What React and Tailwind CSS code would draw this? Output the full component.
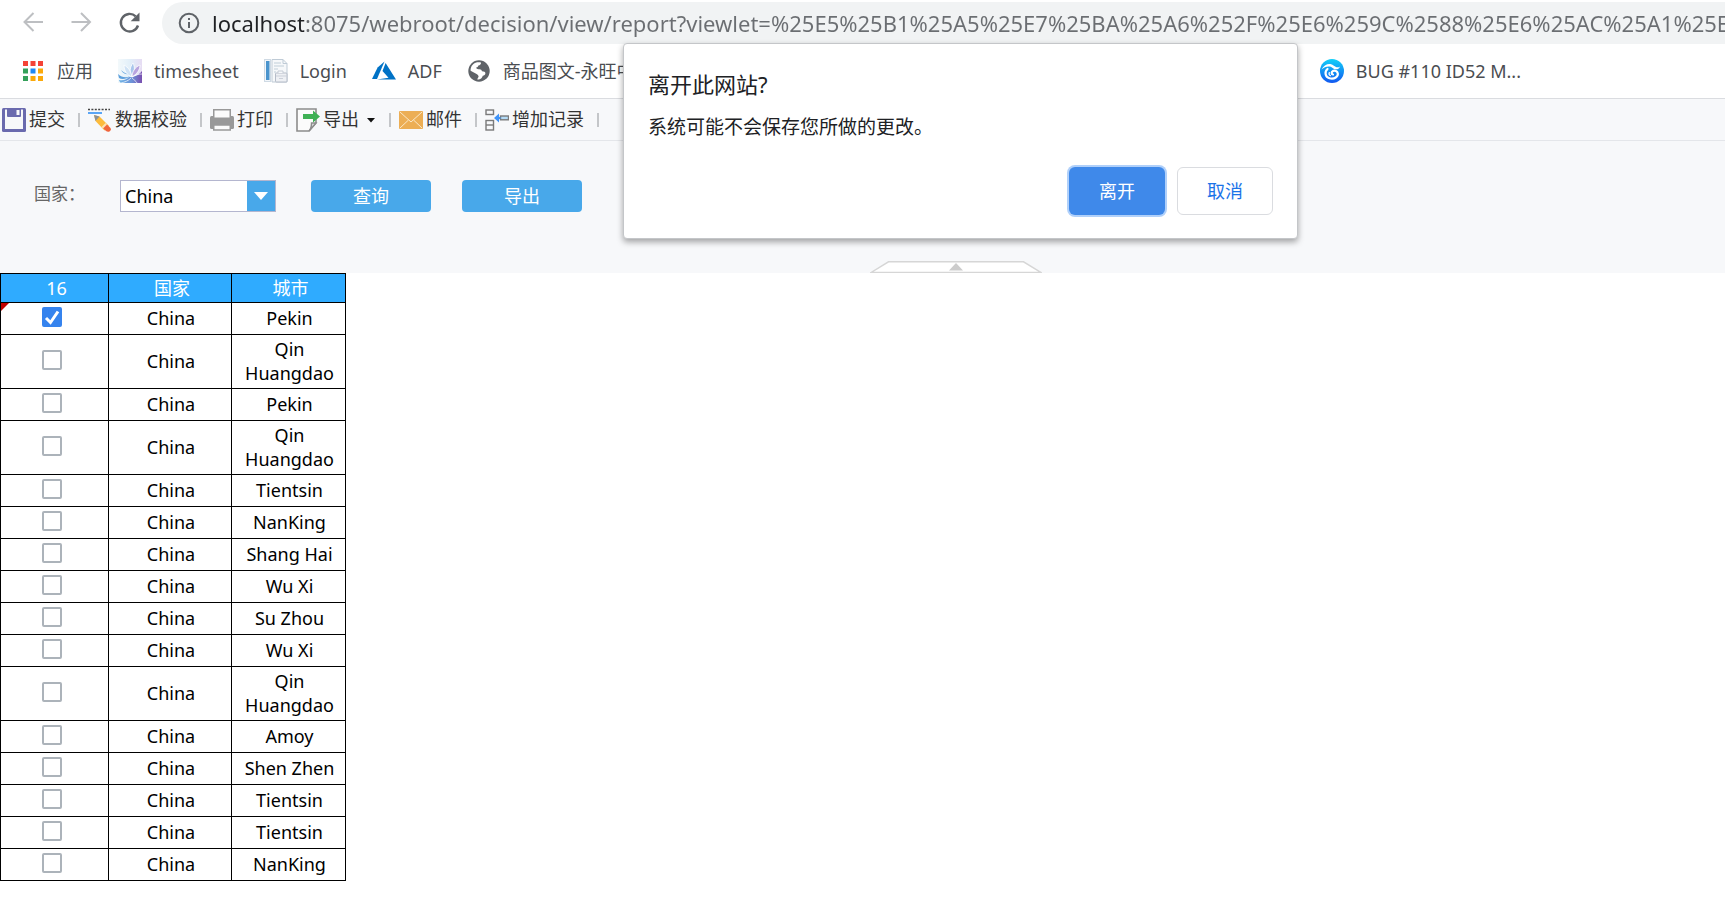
import React, { useState } from 'react';

const URL_TEXT =
  'localhost:8075/webroot/decision/view/report?viewlet=%25E5%25B1%25A5%25E7%25BA%25A6%252F%25E6%259C%2588%25E6%25AC%25A1%25E6';

const ROWS = [
  'Pekin',
  'Qin Huangdao',
  'Pekin',
  'Qin Huangdao',
  'Tientsin',
  'NanKing',
  'Shang Hai',
  'Wu Xi',
  'Su Zhou',
  'Wu Xi',
  'Qin Huangdao',
  'Amoy',
  'Shen Zhen',
  'Tientsin',
  'Tientsin',
  'NanKing',
];

const AppsIcon = () => {
  const colors = ['#f44336', '#f44336', '#f44336', '#34a05a', '#1e88f5', '#fba90a', '#34a05a', '#fba90a', '#fba90a'];
  return (
    <svg width="24" height="24" viewBox="0 0 24 24">
      {colors.map((color, i) => (
        <rect key={i} x={2 + (i % 3) * 7.5} y={2 + Math.floor(i / 3) * 7.5} width="5" height="5" fill={color} />
      ))}
    </svg>
  );
};

const TimesheetIcon = () => (
  <svg width="24" height="24" viewBox="0 0 24 24">
    <defs>
      <linearGradient id="sky" x1="0" y1="0" x2="1" y2="0">
        <stop offset="0" stopColor="#f3f9fb" />
        <stop offset="0.5" stopColor="#e2eff9" />
        <stop offset="1" stopColor="#e6dcf3" />
      </linearGradient>
      <linearGradient id="feather" x1="0" y1="0" x2="1" y2="0">
        <stop offset="0" stopColor="#6fb4e6" />
        <stop offset="0.55" stopColor="#6d93d8" />
        <stop offset="1" stopColor="#7a4fb0" />
      </linearGradient>
    </defs>
    <rect width="24" height="24" fill="url(#sky)" />
    <path d="M24 12v12H3c-1-1-2-2-2-3 5 1 8-1 10-3 4 0 9-1 13-6z" fill="url(#feather)" />
    <path d="M0 15c4 4 9 4 12 2-3 3-8 4-11 2zM3 11c3 3 6 4 9 4-3 1-7 0-9-4z" fill="#5d9fdc" />
    <path d="M15 4c2 4 2 9-1 14-3-5-2-10 1-14z" fill="#a9c6ec" stroke="#ffffff" strokeWidth="0.800" />
    <path d="M22 6c0 5-3 9-8 12 0-5 3-10 8-12z" fill="#b9a4de" stroke="#ffffff" strokeWidth="0.800" />
    <path d="M6 6c4 2 7 6 8 12-5-2-8-6-8-12z" fill="#cfe2f5" stroke="#ffffff" strokeWidth="0.800" />
    <path d="M14 18c3-2 7-3 10-3M13 19c-3 3-6 4-10 5M14 19c2 2 4 3 5 5" stroke="#ffffff" strokeWidth="0.700" fill="none" />
  </svg>
);

const LoginIcon = () => (
  <svg width="24" height="24" viewBox="0 0 24 24">
    <rect x="0.5" y="0.5" width="6" height="22" fill="#f2f6fa" stroke="#cfdae4" />
    <rect x="2" y="2" width="3.5" height="19" fill="#4a94cd" />
    <path d="M8 .5h11l4 4V23H8z" fill="#f6f8fa" stroke="#bfcbd6" />
    <path d="M19 .5v4h4" fill="none" stroke="#bfcbd6" />
    <path d="M10 4h7M10 7h10M10 10h4M10 13h2" stroke="#d2dbe4" strokeWidth="1.5" />
    <rect x="11.5" y="14" width="11.5" height="9" rx="1" fill="#eef0f4" stroke="#b5bcc8" />
    <path d="M12 17h11M15 19.5h4" stroke="#cbd0d9" />
    <path d="M14 14v-2h5v2" fill="#f6f8fa" stroke="#c6ccd6" />
  </svg>
);

const AzureIcon = () => (
  <svg width="24" height="24" viewBox="0 0 24 24">
    <path d="M12.5 2.5 5.6 8.6 0 20h5z" fill="#0072c6" />
    <path d="M13.6 4 10.5 12l6 6.7L5 20.6h19z" fill="#0072c6" />
  </svg>
);

const GlobeIcon = () => (
  <svg width="24" height="24" viewBox="0 0 24 24">
    <circle cx="12" cy="12" r="10.7" fill="#5f6368" />
    <path
      d="M14 3.600c.2 2-1 2.600-2.600 3-.4 1.300-1 1.900-2.200 2 .2 1.500 1 1.700 3 1.600 1.700-.1 2.500.7 2.800 2 2 .1 3.300.5 3.400 2 0 1.700-1.200 2.300-2.600 2.500-.5 1.900-1.900 3.400-4 3.800-.8.1-1.300 0-1.600-.2l1.400-2.600c-.2-1.300-1-2-2-2.600l-6-3.300c-.2-3.800 1.800-6.800 5-8.100 1.800-.6 3.800-.6 5.400-.1z"
      fill="#ffffff"
    />
  </svg>
);

const WaveIcon = () => (
  <svg width="24" height="24" viewBox="0 0 24 24">
    <defs>
      <linearGradient id="wave" x1="0" y1="0" x2="0" y2="1">
        <stop offset="0" stopColor="#12d0f8" />
        <stop offset="1" stopColor="#1258f0" />
      </linearGradient>
    </defs>
    <circle cx="12" cy="12" r="12" fill="url(#wave)" />
    <path
      d="M1.500 10.500C3.500 6.500 7 4.500 10.500 5c3 .5 4 2.800 6 3.200 1.300.3 2.500 0 3.500-.8-.8 2.500-3.500 3.600-5.800 2.600C12.500 9.200 11.500 7.800 9.500 7.600 6.500 7.300 4 8.500 1.500 10.500z"
      fill="#ffffff"
    />
    <path
      d="M7.500 10C4.500 12.500 4.800 18 9.500 19.300c5 1.300 8.800-1.800 8.300-4.800-.4-2.500-3-3.500-4.800-2.600-1.800.9-1.800 3.300 0 3.600"
      stroke="#ffffff"
      strokeWidth="2.200"
      fill="none"
      strokeLinecap="round"
    />
    <path d="M9.300 13.500c-.6 1.500 0 2.700 1.200 3.200" stroke="#ffffff" strokeWidth="1.200" fill="none" strokeLinecap="round" />
  </svg>
);

const SaveIcon = () => (
  <svg width="24" height="24" viewBox="0 0 24 24">
    <rect width="24" height="24" rx="1.500" fill="#6a6aae" />
    <rect x="3" y="1.500" width="18" height="19.500" fill="#f7f8fa" />
    <path d="M5 0h14v8q0 1-1 1H6q-1 0-1-1z" fill="#6a6aae" />
    <rect x="14.500" y="2" width="3" height="5" fill="#f7f8fa" />
  </svg>
);

const VerifyIcon = () => (
  <svg width="24" height="24" viewBox="0 0 24 24">
    <path d="M0 1.500h22" stroke="#444444" strokeWidth="1.500" strokeDasharray="2 1.400" />
    <path d="M0 5h14" stroke="#5aa5f5" strokeWidth="2" />
    <path d="m6 7 5.500 1.500L21 18l-4.500 4.500L7.500 13z" fill="#fcbb3c" />
    <path d="m6 7 5.500 1.500-4 4.500z" fill="#8a8f96" />
    <path d="m18.500 16 4 4q1 2-1 3.500-2 .8-3.500-.5l-3.500-3.500z" fill="#f0653c" />
    <path d="m17.500 15 1.500 1.500-4 4-1.500-1.500z" fill="#fde0b0" />
  </svg>
);

const PrintIcon = () => (
  <svg width="24" height="24" viewBox="0 0 24 24">
    <rect x="0" y="8" width="24" height="13" rx="1.500" fill="#999999" />
    <rect x="3.750" y="1.750" width="16.500" height="9" fill="#fbfbfb" stroke="#999999" strokeWidth="1.500" />
    <rect x="3" y="9.500" width="18" height="2.500" fill="#999999" />
    <rect x="3.750" y="17" width="16.500" height="5" fill="#fbfbfb" stroke="#999999" strokeWidth="1.500" />
  </svg>
);

const ExportIcon = () => (
  <svg width="24" height="24" viewBox="0 0 24 24">
    <path d="M1 1h19v14l-7 8H1z" fill="#fbfbfb" stroke="#8c8c8c" strokeWidth="1.600" />
    <path d="M20 15h-4.500c0 4-1 6.500-2.500 8z" fill="#dddddd" stroke="#8c8c8c" strokeWidth="1.400" />
    <path d="M7 6h10V2.500L24 8.500l-7 6V11H7z" fill="#3fb155" />
  </svg>
);

const MailIcon = () => (
  <svg width="24" height="24" viewBox="0 0 24 24">
    <rect y="3" width="24" height="18" rx="1" fill="#ecae55" />
    <path d="m1 4 11 10L23 4M1 20l8.500-8M23 20l-8.500-8" fill="none" stroke="#fbe8c8" strokeWidth="1" />
  </svg>
);

const InsertIcon = () => (
  <svg width="24" height="24" viewBox="0 0 24 24" fill="none">
    <rect x="1" y="2" width="7.500" height="4.500" stroke="#7a7a7a" strokeWidth="1.400" />
    <rect x="1" y="12.500" width="7.500" height="9.500" stroke="#7a7a7a" strokeWidth="1.400" />
    <path d="M1 17h7.500" stroke="#7a7a7a" strokeWidth="1.400" />
    <rect x="15.500" y="8" width="8" height="3.800" fill="#b5dcf8" stroke="#7a7a7a" strokeWidth="1.400" />
    <path d="M9 10l5-4.500V9h1.500v2H14v3.500z" fill="#3f93f8" />
  </svg>
);

const BOOKMARKS = [
  { label: '应用', icon: <AppsIcon /> },
  { label: 'timesheet', icon: <TimesheetIcon /> },
  { label: 'Login', icon: <LoginIcon /> },
  { label: 'ADF', icon: <AzureIcon /> },
  { label: '商品图文-永旺中', icon: <GlobeIcon />, wide: true },
  { label: 'BUG #110 ID52 M...', icon: <WaveIcon /> },
];

const TOOLS = [
  { label: '提交', icon: <SaveIcon /> },
  { label: '数据校验', icon: <VerifyIcon /> },
  { label: '打印', icon: <PrintIcon /> },
  { label: '导出', icon: <ExportIcon />, menu: true },
  { label: '邮件', icon: <MailIcon /> },
  { label: '增加记录', icon: <InsertIcon /> },
];

const BrowserBar = () => {
  const [url, setUrl] = useState(URL_TEXT);

  return (
    <header className="border-b border-[#dadce0] bg-white">
      <div className="flex h-11 items-center pt-0.5 pl-[22px]">
        <button aria-label="后退" className="mr-6 shrink-0">
          <svg width="24" height="24" viewBox="0 0 24 24" fill="none" stroke="#bdbfc2" strokeWidth="2">
            <path d="M21 11H2.500M11.500 2 2.500 11l9 9" />
          </svg>
        </button>
        <button aria-label="前进" className="mr-6 shrink-0">
          <svg width="24" height="24" viewBox="0 0 24 24" fill="none" stroke="#bdbfc2" strokeWidth="2">
            <path d="M1.500 11H20M11 2l9 9-9 9" />
          </svg>
        </button>
        <button aria-label="重新加载" className="mr-5 shrink-0">
          <svg width="24" height="24" viewBox="0 0 24 24">
            <path d="M20 14.500a8.800 8.800 0 1 1-2.300-9.200" fill="none" stroke="#5f6368" strokeWidth="2.400" />
            <path d="M21.500 1.500v8.800h-8.800z" fill="#5f6368" />
          </svg>
        </button>
        <div className="flex h-full min-w-0 grow items-center rounded-l-full bg-[#f1f3f4] pl-4">
          <svg className="mr-3 shrink-0" width="22" height="22" viewBox="0 0 22 22">
            <circle cx="11" cy="11" r="9.300" fill="none" stroke="#5f6368" strokeWidth="2" />
            <path d="M10 10h2v6h-2zM10 6h2v2h-2z" fill="#5f6368" />
          </svg>
          <input
            aria-label="地址"
            value={url}
            onChange={(e) => setUrl(e.target.value)}
            className="min-w-0 grow bg-[linear-gradient(to_right,#202124_92px,#6b6e72_92px)] bg-clip-text text-[22px] text-transparent outline-none"
          />
        </div>
      </div>
      <nav className="flex h-[54px] items-center gap-[25px] pl-[21px] text-[18px] text-[#4a4d51]">
        {BOOKMARKS.map((item) => (
          <a
            key={item.label}
            href="#"
            className={`flex shrink-0 items-center gap-3 whitespace-nowrap ${item.wide ? 'w-[828px]' : ''}`}
          >
            {item.icon}
            {item.label}
          </a>
        ))}
      </nav>
    </header>
  );
};

const Toolbar = () => (
  <div className="flex h-[42px] items-center border-b border-[#e4e6ea] pl-0.5 text-[18px] text-[#333333]">
    {TOOLS.map((tool) => (
      <React.Fragment key={tool.label}>
        <button className="flex items-center gap-[3px] whitespace-nowrap">
          {tool.icon}
          {tool.label}
          {tool.menu && (
            <svg className="ml-1" width="10" height="6" viewBox="0 0 10 6">
              <path d="M1 1h8L5 5.500z" fill="#111111" />
            </svg>
          )}
        </button>
        <span className="mr-2 ml-[13px] h-3.5 w-0.5 bg-[#c4c6c9]" />
      </React.Fragment>
    ))}
  </div>
);

const ParamPanel = () => (
  <div className="flex h-[132px] flex-col">
    <div className="flex grow items-start pt-[39px] pl-[34px] text-[18px] leading-8">
      <label htmlFor="country" className="w-[86px] text-[17px] leading-7 text-[#666666]">
        国家：
      </label>
      <div className="relative mr-[35px]">
        <select
          id="country"
          className="block h-8 w-[156px] appearance-none border border-[#b4b6cf] bg-white pl-1 leading-7 text-black"
        >
          <option>China</option>
        </select>
        <span className="pointer-events-none absolute inset-y-px right-px flex w-7 items-center justify-center bg-[#48a8ea]">
          <svg width="14" height="8" viewBox="0 0 14 8">
            <path d="M0 0h14L7 8z" fill="#ffffff" />
          </svg>
        </span>
      </div>
      <button className="mr-[31px] h-8 w-[120px] rounded bg-[#48a8ea] leading-7 text-white">查询</button>
      <button className="h-8 w-[120px] rounded bg-[#48a8ea] leading-7 text-white">导出</button>
    </div>
    <div className="flex justify-center pl-[186px]">
      <button aria-label="收起">
        <svg className="block" width="172" height="12" viewBox="0 0 172 12">
          <path d="M1 11.500 18.500.8h135L171 11.500z" fill="#ffffff" stroke="#d6d6d6" strokeWidth="1.400" />
          <path d="M79 9.500 86 2l7 7.500z" fill="#cccccc" />
        </svg>
      </button>
    </div>
  </div>
);

const ReportTable = () => {
  const [checked, setChecked] = useState(ROWS.map((_, i) => i === 0));

  const toggle = (index) => {
    setChecked(checked.map((value, i) => (i === index ? !value : value)));
  };

  return (
    <table className="w-[346px] table-fixed border-collapse text-center text-[18px] leading-6 text-black">
      <colgroup>
        <col className="w-[108px]" />
        <col className="w-[123px]" />
        <col className="w-[114px]" />
      </colgroup>
      <thead>
        <tr className="h-[29px] bg-[#2fabff] text-white">
          <th className="border border-black p-0 pl-1 font-normal">16</th>
          <th className="border border-black p-0 pl-1 font-normal">国家</th>
          <th className="border border-black p-0 pl-1 font-normal">城市</th>
        </tr>
      </thead>
      <tbody>
        {ROWS.map((city, index) => (
          <tr key={index} className="h-8">
            <td className="relative border border-black p-0 pr-1.5 pb-[3px]">
              {index === 0 && (
                <svg className="absolute top-0 left-0" width="8" height="8" viewBox="0 0 8 8">
                  <path d="M0 0h8L0 8z" fill="#c00000" />
                </svg>
              )}
              <label className="relative mx-auto block size-5">
                <input
                  type="checkbox"
                  aria-label={`${city} ${index + 1}`}
                  checked={checked[index]}
                  onChange={() => toggle(index)}
                  className="block size-5 appearance-none rounded-xs border-2 border-[#acb3ba] bg-white checked:border-[#3583ee] checked:bg-[#3583ee]"
                />
                {checked[index] && (
                  <svg className="pointer-events-none absolute inset-0" width="20" height="20" viewBox="0 0 20 20">
                    <path d="m4 11 4.500 4.500L16 4.500" fill="none" stroke="#ffffff" strokeWidth="3" />
                  </svg>
                )}
              </label>
            </td>
            <td className="border border-black p-0 pb-0.5 pl-0.5">China</td>
            <td className="border border-black pt-0.5 pr-2 pb-[3px] pl-2.5">{city}</td>
          </tr>
        ))}
      </tbody>
    </table>
  );
};

const LeaveDialog = () => (
  <div
    role="dialog"
    aria-labelledby="leave-title"
    className="absolute top-[43px] left-[623px] w-[675px] rounded-sm border border-[#c4c6c9] bg-white px-6 pt-6 pb-[23px] text-[#202124] shadow-[0_3px_6px_rgba(0,0,0,0.35)]"
  >
    <h2 id="leave-title" className="text-[22px] leading-8">
      离开此网站?
    </h2>
    <p className="mt-[13px] text-[19px] leading-7">系统可能不会保存您所做的更改。</p>
    <div className="mt-[26px] flex justify-end gap-3 text-[18px]">
      <button className="h-12 w-24 rounded-md bg-[#3f89ea] text-white ring-2 ring-[#b0d0fa]">离开</button>
      <button className="h-12 w-24 rounded-md border border-[#dadce0] text-[#1a73e8]">取消</button>
    </div>
  </div>
);

export default function App() {
  return (
    <div className="relative min-h-screen overflow-hidden bg-white font-['Noto_Sans','Noto_Sans_CJK_SC',sans-serif]">
      <BrowserBar />
      <div className="bg-[#f7f8fa]">
        <Toolbar />
        <ParamPanel />
      </div>
      <ReportTable />
      <LeaveDialog />
    </div>
  );
}
